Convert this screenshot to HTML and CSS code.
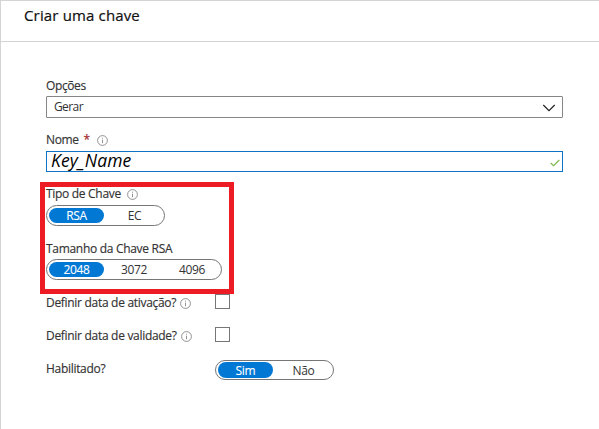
FILE: index.html
```html
<!DOCTYPE html>
<html lang="pt">
<head>
<meta charset="utf-8">
<title>Criar uma chave</title>
<link rel="stylesheet" href="styles.css">
</head>
<body>
<svg width="0" height="0" class="defs"><symbol id="info" viewBox="0 0 11 11"><circle cx="5.5" cy="5.5" r="4.9" fill="none" stroke="#777" stroke-width=".8"/><path d="M5.5 4.7v3.5M5.5 2.7v1" stroke="#777" stroke-width=".8"/></symbol></svg>
<main class="panel">
  <header class="head"><h1>Criar uma chave</h1></header>
  <form class="form">
    <div class="field options">
      <label><span class="t-options">Opções</span></label>
      <div class="box select"><span class="t-value">Gerar</span>
        <svg width="14" height="8" viewBox="0 0 14 8"><path d="M1.3 1 7 6.6 12.7 1" fill="none" stroke="#222" stroke-width="1.2"/></svg>
      </div>
    </div>
    <div class="field name">
      <label><span class="t-name">Nome</span><span class="star">*</span><svg class="info"><use href="#info"/></svg></label>
      <div class="box input"><span class="key">Key_Name</span>
        <svg width="10" height="8" viewBox="0 0 10 8"><path d="M.7 4 3.6 6.7 9.3 1" fill="none" stroke="#7fba4a" stroke-width="1.2"/></svg>
      </div>
    </div>
    <div class="highlight-group">
      <div class="field type">
        <label><span class="t-type">Tipo de Chave</span><svg class="info"><use href="#info"/></svg></label>
        <div class="pill"><span class="on">RSA</span><span>EC</span></div>
      </div>
      <div class="field size">
        <label><span class="t-size">Tamanho da Chave RSA</span></label>
        <div class="pill sizes"><span class="on">2048</span><span>3072</span><span>4096</span></div>
      </div>
      <div class="highlight"></div>
    </div>
    <div class="row"><label><span class="t-act">Definir data de ativação?</span><svg class="info"><use href="#info"/></svg></label><i class="check"></i></div>
    <div class="row"><label><span class="t-val">Definir data de validade?</span><svg class="info"><use href="#info"/></svg></label><i class="check"></i></div>
    <div class="row enabled"><label><span class="t-hab">Habilitado?</span></label><div class="pill"><span class="on">Sim</span><span>Não</span></div></div>
  </form>
</main>
</body>
</html>
```
FILE: styles.css
```css
* { box-sizing: border-box; }
body { margin: 0; background: #fff; color: #333; font: 12px/16px "Open Sans", "Noto Sans", sans-serif; overflow: hidden; }
.defs { position: absolute; }
.panel { height: 429px; border: solid #d4d4d4; border-width: 1px 0 0 1px; }
.head { height: 41px; padding: 3px 0 0 23px; border-bottom: 1px solid #d4d4d4; }
h1 { margin: 0; font-size: 15px; line-height: 22px; font-weight: 500; color: #111; letter-spacing: .15px; -webkit-text-stroke: .2px #111; }
.form { padding: 36px 36px 0 45px; }
label { display: flex; align-items: center; height: 16px; white-space: nowrap; letter-spacing: -.3px; -webkit-text-stroke: .15px #333; }
.info { width: 11px; height: 11px; flex: none; }
.box { display: flex; align-items: center; justify-content: space-between; height: 22px; border: 1px solid #858585; margin-top: 2px; }
.options { height: 54px; }
.select { padding: 0 6px 0 7px; border-radius: 1px; }
.select svg { margin-top: 2px; }
.t-options { letter-spacing: -.4px; }
.t-value { letter-spacing: -.6px; }
.name { height: 54px; }
.name .box { height: 21px; margin-top: 3px; }
.input { border-color: #0f71c4; padding: 0 2px 0 4px; }
.input svg { position: relative; top: 1px; }
.t-name { letter-spacing: -.4px; }
.star { width: 6px; margin-left: 5px; color: #a4262c; font-size: 12px; -webkit-text-stroke: .2px #a4262c; }
.name .info { margin-left: 7px; }
.key { position: relative; top: -2px; font-size: 17.5px; line-height: 18px; font-style: italic; color: #000; letter-spacing: .1px; }
.highlight-group { position: relative; height: 109px; }
.highlight { position: absolute; left: -6px; top: -4px; width: 194px; height: 112px; border: 5px solid #ed1c24; }
.field.type { height: 55px; }
.size .pill { margin-top: 2px; }
.type .info { margin-left: 6px; }
.pill { display: flex; width: 119px; height: 21px; padding: 2px; border: 1px solid #767676; border-radius: 11px; margin-top: 3px; }
.pill span { flex: none; width: 55px; height: 15px; border-radius: 8px; line-height: 16px; text-align: center; letter-spacing: -.3px; }
.pill span + span { width: 61px; }
.pill .on { background: #0078d4; color: #fff; -webkit-text-stroke: .1px #fff; }
.pill.sizes { width: 176px; }
.pill.sizes span { letter-spacing: -.4px; }
.pill.sizes span + span { width: 58px; position: relative; left: 1px; }
.row { display: flex; height: 33px; }
.row label { width: 169px; }
.check { width: 15px; height: 15px; margin-top: -1px; border: 1px solid #767676; }
.row .info { margin-left: 4px; }
.enabled .pill { height: 20px; margin-top: -1px; padding-top: 1px; }
.enabled .pill span { height: 16px; line-height: 17px; }
```
